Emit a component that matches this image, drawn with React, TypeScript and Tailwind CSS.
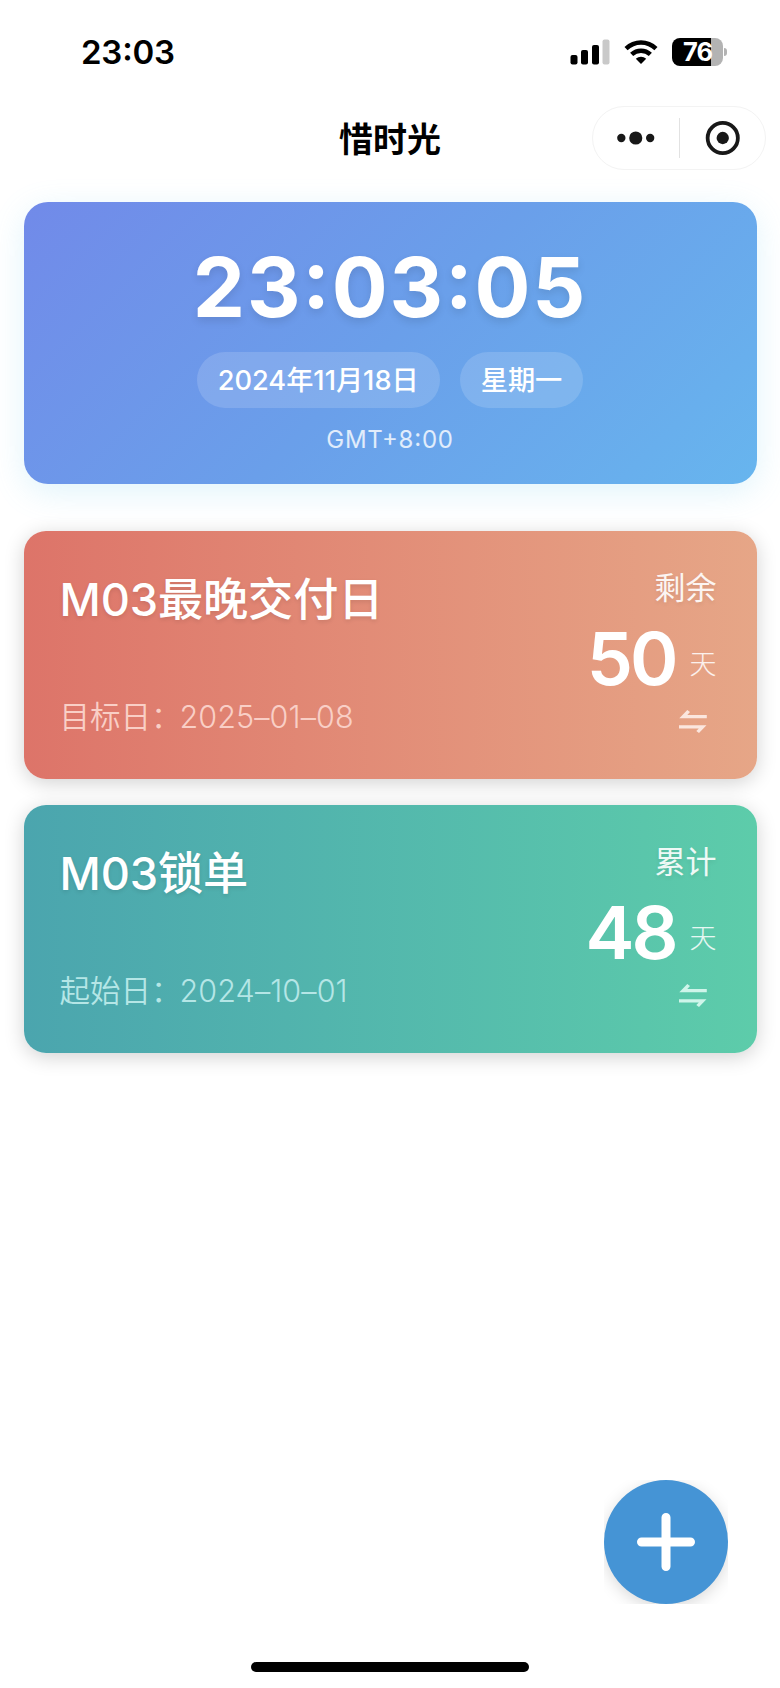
const fontCls = "font-['Inter','Noto_Sans_CJK_SC',sans-serif]";

interface CountCard {
  title:    string;
  label:    string;
  date:     string;
  kind:     string;
  days:     number;
  bg:       string;
  dateCls:  string;
  iconCls:  string;
}

const cards: CountCard[] = [
  {
    title: "M03最晚交付日", label: "目标日：", date: "2025–01–08", kind: "剩余", days: 50,
    bg: "bg-linear-to-r from-[#dd7469] to-[#e6a687]", dateCls: "text-[#f9cfc6]", iconCls: "text-[#fbe6de]",
  },
  {
    title: "M03锁单", label: "起始日：", date: "2024–10–01", kind: "累计", days: 48,
    bg: "bg-linear-to-r from-[#4ba5ae] to-[#5dccaa]", dateCls: "text-[#b5e6e6]", iconCls: "text-[#cff5ea]",
  },
];

export default function App() {
  return (
    <div className={`relative flex h-[1688px] w-[780px] flex-col overflow-hidden bg-white text-black ${fontCls}`}>
      <StatusBar />
      <NavBar />
      <main className="flex flex-col px-[23.5px] pt-[32px]">
        <Clock />
        <div className="mt-[47px] flex flex-col gap-[26px]">
          {cards.map((c) => <Card key={c.title} card={c} />)}
        </div>
      </main>
      <AddButton />
      <div className="absolute bottom-[16px] left-[251px] h-[10px] w-[278px] rounded-full bg-black" />
    </div>
  );
}

function StatusBar() {
  return (
    <header className="flex h-[104px] items-center justify-between pr-[53px] pl-[81px]">
      <span className="text-[33px] leading-[40px] font-semibold tracking-[-0.2px] [font-feature-settings:'case']">23:03</span>
      <div className="flex items-center">
        <svg width="40" height="26" viewBox="0 0 40 26" className="mr-[14px]">
          <rect x="0.5" y="16" width="7" height="9.500" rx="2" />
          <rect x="11" y="11" width="7" height="14.500" rx="2" />
          <rect x="22" y="6" width="7" height="19.500" rx="2" />
          <rect x="32.500" y="0.500" width="7" height="25" rx="2" fill="#c9c9c9" />
        </svg>
        <svg width="34" height="26" viewBox="0 0 34 26" className="mr-[14px]">
          <path d="M0.500 7.900A24 24 0 0 1 33.500 7.900L30.400 11.200A19.400 19.400 0 0 0 3.600 11.200Z" />
          <path d="M6.100 13.800A16 16 0 0 1 27.900 13.800L24.800 17A11.500 11.500 0 0 0 9.200 17Z" />
          <path d="M11.800 19.700A8 8 0 0 1 22.200 19.700L17 25Z" />
        </svg>
        <div className="flex h-[28px] w-[51px] items-center justify-center rounded-[8px] bg-linear-to-r from-black from-[76%] to-[#b3b3b3] to-[76%]">
          <span className="text-[25.500px] leading-none font-bold tracking-[-1px] text-white">76</span>
        </div>
        <div className="ml-[1px] h-[8px] w-[3px] rounded-r-full bg-[#b3b3b3]" />
      </div>
    </header>
  );
}

function NavBar() {
  return (
    <nav className="relative flex h-[66px] items-center justify-center pt-[5px]">
      <h1 className="text-[34px] leading-[40px] font-bold">惜时光</h1>
      <div className="absolute top-[2px] right-[14px] flex h-[64px] w-[174px] items-center rounded-full border border-[#f3f3f3]">
        <svg width="86" height="40" viewBox="0 0 86 40" fill="#181818">
          <circle cx="28.500" cy="20" r="4.200" />
          <circle cx="43" cy="20" r="6.600" />
          <circle cx="57.500" cy="20" r="4.200" />
        </svg>
        <div className="h-[40px] w-[1px] bg-[#e2e2e2]" />
        <svg width="86" height="40" viewBox="0 0 86 40" fill="#181818">
          <circle cx="43" cy="20" r="15.200" fill="none" stroke="#181818" strokeWidth="3.800" />
          <circle cx="43" cy="20" r="6.200" />
        </svg>
      </div>
    </nav>
  );
}

function Clock() {
  return (
    <section className="flex h-[282px] flex-col items-center rounded-[24px] bg-linear-135 from-[#718ae9] via-[#6a9fea] to-[#67b5ee] pt-[35px] text-white shadow-[0_8px_32px_rgba(99,199,237,0.2)]">
      <div className="text-[83px] leading-[100px] font-bold tracking-[1.8px] text-shadow-[0_4px_8px_rgba(0,0,0,0.1)] [font-feature-settings:'case']">23:03:05</div>
      <div className="mt-[15px] flex gap-[20px]">
        <Pill>2024年11月18日</Pill>
        <Pill>星期一</Pill>
      </div>
      <div className="mt-[16px] text-[24px] leading-[32px] tracking-[0.8px] text-white/80 [font-feature-settings:'case']">GMT+8:00</div>
    </section>
  );
}

function Pill({ children }: { children: React.ReactNode }) {
  return (
    <span className="flex h-[56px] items-center rounded-full bg-white/15 px-[21px] pt-[1px] text-[27.200px] leading-none font-medium whitespace-nowrap">
      {children}
    </span>
  );
}

function Card({ card }: { card: CountCard }) {
  return (
    <article className={`flex h-[248px] justify-between rounded-[22px] pr-[40px] pl-[36px] text-white shadow-[0_4px_20px_rgba(0,0,0,0.18)] ${card.bg}`}>
      <div className="flex flex-col pt-[39px]">
        <h2 className="text-[45.200px] leading-[60px] font-medium tracking-[-0.1px] text-shadow-[0_2px_4px_rgba(0,0,0,0.1)]">{card.title}</h2>
        <p className={`mt-[67px] text-[30.500px] leading-[40px] ${card.dateCls}`}>
          <span className="font-[350]">{card.label}</span>
          <span className="-ml-[2px] font-[350] tracking-[0.1px]">{card.date}</span>
        </p>
      </div>
      <div className="flex flex-col items-end pt-[37px]">
        <span className="text-[31px] leading-[40px] text-white/90 text-shadow-[0_2px_4px_rgba(0,0,0,0.08)]">{card.kind}</span>
        <div className="mt-[6px] flex h-[90px] items-center gap-[14px]">
          <span className="text-[73.500px] leading-[90px] font-[560] tracking-[-3px]">{card.days}</span>
          <span className="pt-[12px] text-[27px] leading-[40px] font-light text-white/85">天</span>
        </div>
        <svg width="28" height="24" viewBox="0 0 28 24" className={`mt-[6px] mr-[10px] ${card.iconCls}`} fill="currentColor">
          <path d="M0.300 8.300L8.300 0L11 2L8.300 4.900H27.800V8.300Z" />
          <path d="M27.500 15.200L20 23L17.300 20.900L19.800 18.600H0V15.200Z" />
        </svg>
      </div>
    </article>
  );
}

function AddButton() {
  return (
    <div className="absolute top-[1480px] left-[604px] size-[124px] overflow-hidden">
      <button className="flex size-[124px] items-center justify-center rounded-full bg-[#4594d5] shadow-[0_4px_16px_rgba(0,0,0,0.15)]">
        <svg width="60" height="60" viewBox="0 0 60 60" fill="none" stroke="#fff" strokeWidth="9" strokeLinecap="round">
          <path d="M30 5.500V54.500M5.500 30H54.500" />
          <path d="M30 23L37 30L30 37L23 30Z" fill="#fff" stroke="none" />
        </svg>
      </button>
    </div>
  );
}
